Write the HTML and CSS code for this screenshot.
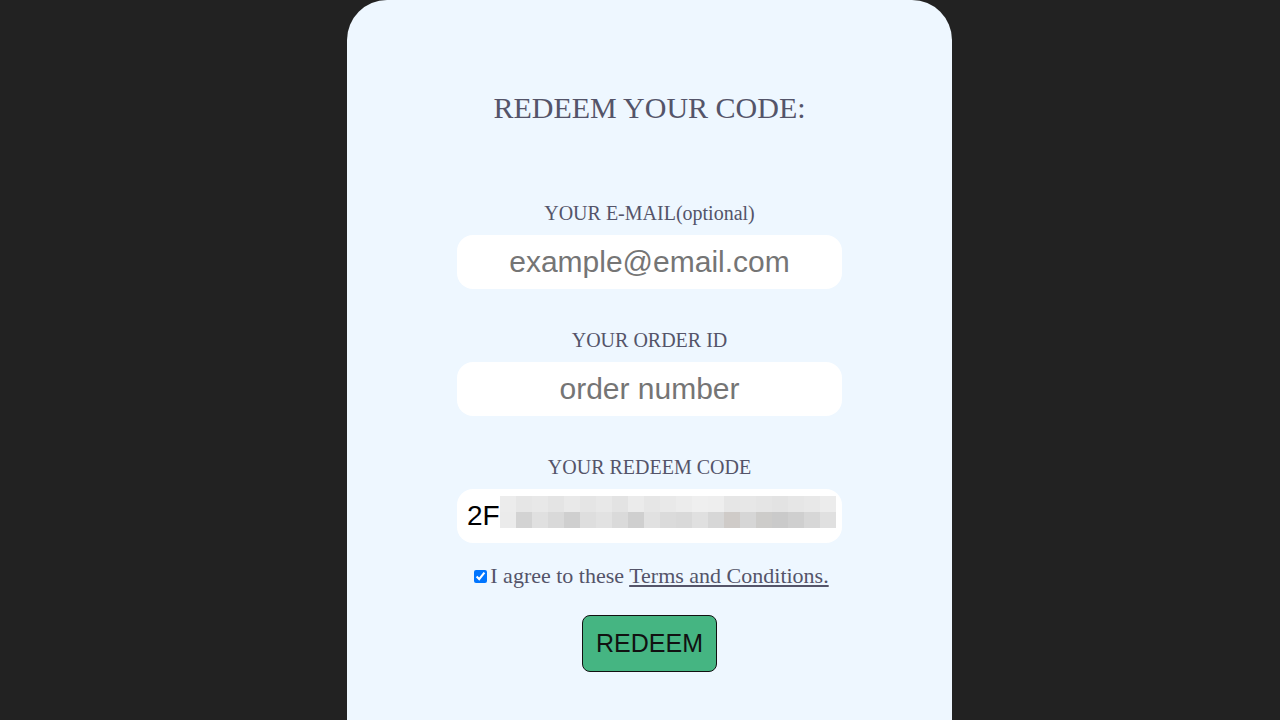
FILE: index.html
```html
<!DOCTYPE html>
<html lang="en">
<head>
    <meta charset="UTF-8">
    <meta name="viewport" content="width=device-width, initial-scale=1.0">
    <title>Redeem Code</title>
    <link rel="stylesheet" href="styles.css">
</head>
<body>
<div class="card">
    <h1 class="title">REDEEM YOUR CODE:</h1>
    <form class="redeem-form">
        <div class="field">
            <label for="email">YOUR E-MAIL(optional)</label>
            <input class="input" type="email" id="email" placeholder="example@email.com">
        </div>
        <div class="field">
            <label for="order">YOUR ORDER ID</label>
            <input class="input" type="text" id="order" placeholder="order number">
        </div>
        <div class="field">
            <label>YOUR REDEEM CODE</label>
            <div class="input code-input">
                <span>2F</span>
                <span class="mosaic">
                    <i style="background:#ececec"></i><i style="background:#e6e6e6"></i><i style="background:#e8e8e8"></i><i style="background:#e4e4e4"></i><i style="background:#e9e9e9"></i><i style="background:#e5e5e5"></i><i style="background:#e8e8e8"></i><i style="background:#e3e3e3"></i><i style="background:#ebebeb"></i><i style="background:#e6e6e6"></i><i style="background:#e9e9e9"></i><i style="background:#ececec"></i><i style="background:#efefef"></i><i style="background:#eeeeee"></i><i style="background:#e6e6e6"></i><i style="background:#e7e7e7"></i><i style="background:#e5e5e5"></i><i style="background:#e3e3e3"></i><i style="background:#e6e6e6"></i><i style="background:#e8e8e8"></i><i style="background:#ececec"></i>
                    <i style="background:#ebebeb"></i><i style="background:#d3d3d3"></i><i style="background:#e0e0e0"></i><i style="background:#d9d9d9"></i><i style="background:#cfcfcf"></i><i style="background:#dedede"></i><i style="background:#e2e2e2"></i><i style="background:#dadada"></i><i style="background:#cfcfcf"></i><i style="background:#e1e1e1"></i><i style="background:#dbdbdb"></i><i style="background:#d9d9d9"></i><i style="background:#e0e0e0"></i><i style="background:#d7d7d7"></i><i style="background:#cfcbc8"></i><i style="background:#d6d6d6"></i><i style="background:#cdccca"></i><i style="background:#cacaca"></i><i style="background:#cfcfcf"></i><i style="background:#d7d7d7"></i><i style="background:#e0e0e0"></i>
                </span>
            </div>
        </div>
        <div class="agree">
            <input type="checkbox" id="terms" checked>
            <label for="terms">I agree to these <a href="#">Terms and Conditions.</a></label>
        </div>
        <button class="button" type="submit">REDEEM</button>
    </form>
</div>
</body>
</html>
```

FILE: styles.css
```css
        body {
            margin: 0;
            padding-left: 19px;
            background-color: #222222;
            font-family: 'Liberation Serif', serif;
            color: #545469;
        }
        .card {
            width: 605px;
            height: 720px;
            margin: 0 auto;
            background-color: #eef7ff;
            border-radius: 40px 40px 0 0;
            text-align: center;
            box-sizing: border-box;
            padding-top: 91px;
            overflow: hidden;
        }
        .title {
            font-size: 30px;
            font-weight: normal;
            margin: 0 0 77px;
        }
        .redeem-form {
            display: flex;
            flex-direction: column;
            align-items: center;
        }
        .field {
            display: flex;
            flex-direction: column;
            align-items: center;
            margin-bottom: 40px;
        }
        .field label {
            font-size: 20px;
            margin-bottom: 10px;
        }
        .input {
            width: 385px;
            height: 54px;
            box-sizing: border-box;
            border: none;
            border-radius: 16px;
            background-color: #ffffff;
            font-family: 'Liberation Sans', Arial, sans-serif;
            font-size: 30px;
            text-align: center;
            color: #000;
            outline: none;
        }
        .input::placeholder {
            color: #757575;
        }
        .code-input {
            display: flex;
            align-items: center;
            padding: 0 8px 0 10px;
            font-size: 28px;
            text-align: left;
        }
        .mosaic {
            display: grid;
            grid-template-columns: repeat(21, 16px);
            grid-auto-rows: 16px;
            align-self: flex-start;
            margin-top: 7px;
        }
        .mosaic i {
            display: block;
        }
        .agree {
            display: flex;
            align-items: center;
            font-size: 22px;
            margin-top: -20px;
        }
        .agree input {
            width: 13px;
            height: 13px;
            margin: 0 3px 0 4px;
        }
        .agree a {
            color: #545469;
        }
        .button {
            margin-top: 26px;
            padding: 0;
            width: 135px;
            height: 57px;
            font-family: 'Liberation Sans', Arial, sans-serif;
            font-size: 25px;
            color: #111;
            background-color: #45b582;
            border: 1px solid #111;
            border-radius: 8px;
            cursor: pointer;
        }
```
